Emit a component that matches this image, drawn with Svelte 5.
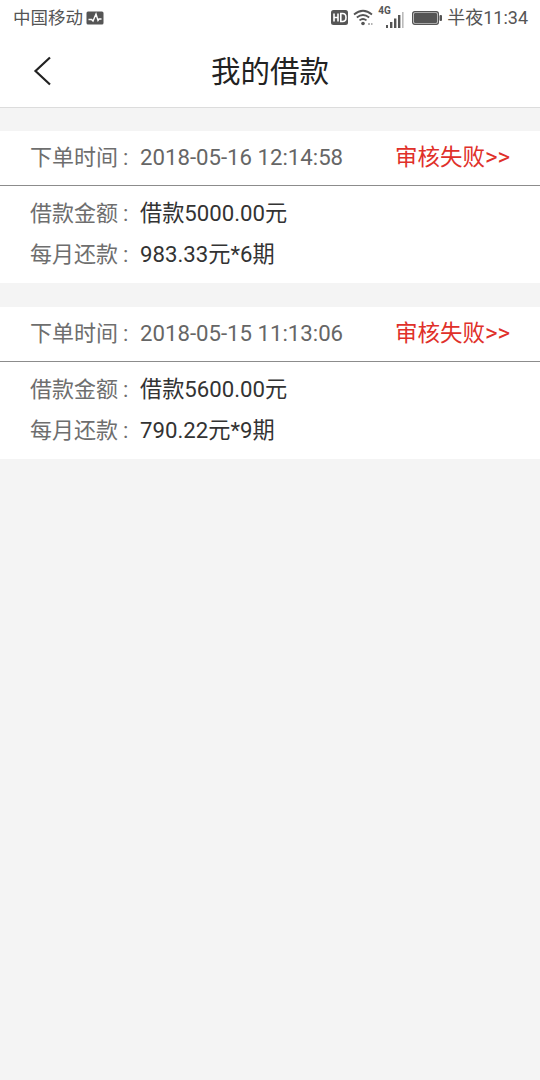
<script>
  const orders = [
    { time: '2018-05-16 12:14:58', amount: '借款5000.00元', monthly: '983.33元*6期' },
    { time: '2018-05-15 11:13:06', amount: '借款5600.00元', monthly: '790.22元*9期' }
  ];
</script>

<div class="page">
  <div class="status">
    <div class="side">
      <span class="st carrier">中国移动</span>
      <svg class="pulse" width="18" height="14" viewBox="0 0 18 14">
        <rect x="0.5" y="0.5" width="17" height="13" rx="1.5" fill="#555"/>
        <path d="M2.5 8.5h3l1.500 1.500 3-7 2 6.500 1-1.500h2.500" fill="none" stroke="#fff" stroke-width="1.400"/>
      </svg>
    </div>
    <div class="side">
      <svg class="hd" width="17" height="15" viewBox="0 0 17 15">
        <rect x="0" y="0" width="17" height="15" rx="2.500" fill="#555"/>
        <path d="M3 3.500v8M3 7.500h4M7 3.500v8M9.800 3.500v8h1.700q3.500 0 3.500-4t-3.500-4z" fill="none" stroke="#fff" stroke-width="1.600"/>
      </svg>
      <svg class="wifi" width="21" height="18" viewBox="0 0 21 18">
        <path d="M1 5.500q9-7.500 18 0M3.800 8.500q6.200-5 12.400 0M6.500 11.400q3.500-2.800 7 0" fill="none" stroke="#555" stroke-width="1.700"/>
        <circle cx="10" cy="14.500" r="1.800" fill="#555"/>
        <path d="M15 15h2M18 15h1.500" stroke="#999" stroke-width="1.500"/>
      </svg>
      <div class="signal">
        <span class="net">4G</span>
        <svg width="18" height="17" viewBox="0 0 18 17">
          <rect x="0" y="14" width="2" height="3" fill="#555"/>
          <rect x="4" y="11" width="2.400" height="6" fill="#555"/>
          <rect x="8" y="7.500" width="2.400" height="9.500" fill="#555"/>
          <rect x="12" y="4" width="2.400" height="13" fill="#555"/>
          <rect x="16" y="1" width="1.600" height="16" fill="#bbb"/>
        </svg>
      </div>
      <svg class="battery" width="30" height="14" viewBox="0 0 30 14">
        <rect x="0.700" y="0.700" width="25.600" height="12.600" rx="2" fill="#fff" stroke="#555" stroke-width="1.400"/>
        <rect x="2" y="2" width="23" height="10" rx="1" fill="#555"/>
        <rect x="27.500" y="4" width="2.500" height="6" rx="1" fill="#555"/>
      </svg>
      <span class="st">半夜11:34</span>
    </div>
  </div>

  <header>
    <svg class="back" width="20" height="30" viewBox="0 0 20 30">
      <path d="M18 1.500 3.500 15 18 28.500" fill="none" stroke="#222" stroke-width="2.200"/>
    </svg>
    <h1>我的借款</h1>
  </header>

  {#each orders as o}
    <section class="card">
      <div class="top">
        <div class="line"><span class="label">下单时间<span class="colon">:</span></span><span class="time">{o.time}</span></div>
        <span class="state">审核失败<span class="arrows">&gt;&gt;</span></span>
      </div>
      <div class="body">
        <div class="line row"><span class="label">借款金额<span class="colon">:</span></span><span class="val">{o.amount}</span></div>
        <div class="line row"><span class="label">每月还款<span class="colon">:</span></span><span class="val">{o.monthly}</span></div>
      </div>
    </section>
  {/each}
</div>

<style>
  :global(body) { margin: 0; background: #f4f4f4; }
  .page {
    width: 540px;
    min-height: 1080px;
    background: #f4f4f4;
    font-family: Roboto, "Noto Sans CJK SC", sans-serif;
  }
  .status {
    height: 36px;
    background: #fff;
    display: flex;
    justify-content: space-between;
    align-items: center;
    padding: 0 12px 0 13px;
  }
  .side { display: flex; align-items: center; }
  .st { font-size: 18px; color: #555; line-height: 36px; }
  .carrier { font-size: 17.500px; }
  .pulse { margin-left: 3px; }
  .hd { margin-bottom: 2px; }
  .wifi { margin-left: 5px; }
  .signal {
    position: relative;
    margin-left: 4px;
    width: 26px;
    height: 20px;
    display: flex;
    align-items: flex-end;
    justify-content: flex-end;
  }
  .net { position: absolute; left: 0; top: -3px; font-size: 10px; font-weight: 700; color: #555; }
  .battery { margin: 0 5px 0 8px; }
  header {
    height: 65px;
    padding-bottom: 6px;
    background: #fff;
    border-bottom: 1px solid #dcdcdc;
    position: relative;
    display: flex;
    align-items: center;
    justify-content: center;
  }
  .back { position: absolute; left: 32px; top: 20px; }
  h1 { margin: 0; font-size: 29.500px; font-weight: 400; color: #222; }
  .card { background: #fff; margin-top: 23px; }
  .card + .card { margin-top: 24px; }
  .top {
    height: 44px;
    padding: 10px 30px 0;
    border-bottom: 1px solid #8c8c8c;
    display: flex;
    align-items: baseline;
    justify-content: space-between;
    line-height: 32px;
  }
  .line { font-size: 22.200px; display: flex; align-items: baseline; }
  .label { color: #6e6e6e; font-size: 22px; width: 110px; white-space: nowrap; }
  .colon { margin-left: 5px; }
  .time { color: #666; }
  .state { color: #e0302a; font-size: 22.500px; margin-left: -1px; }
  .arrows { font-size: 24px; }
  .body { padding: 7px 30px 8px; line-height: 41px; }
  .row { height: 41px; }
  .val { color: #333; }
</style>
